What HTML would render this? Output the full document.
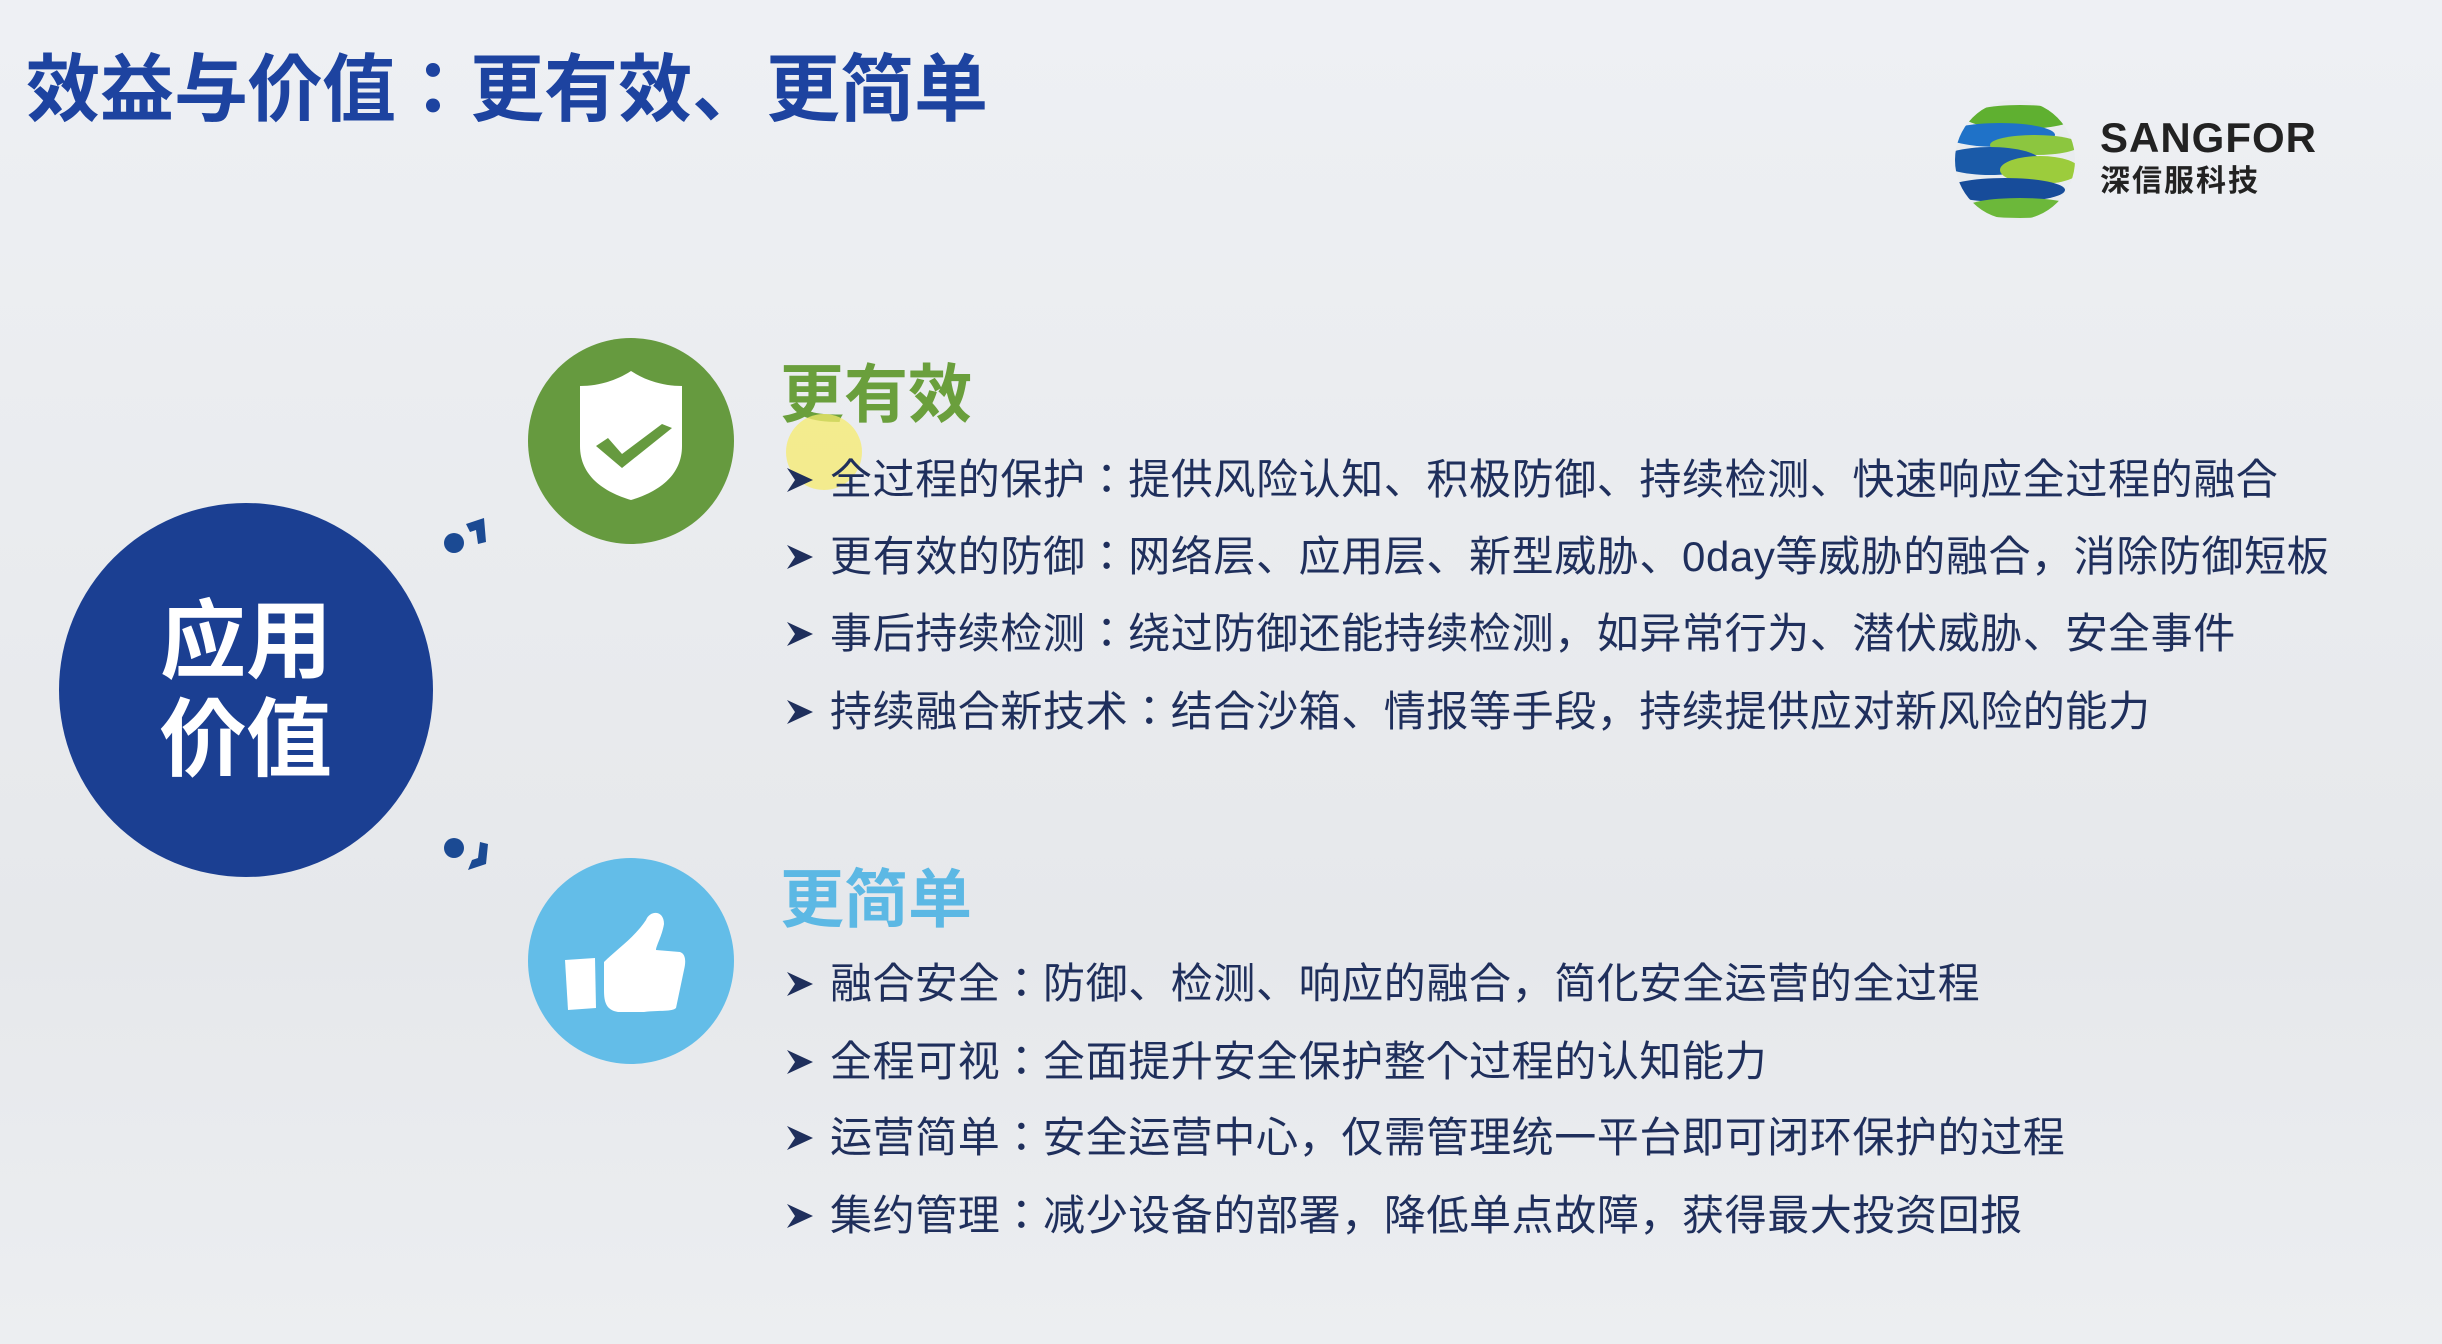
<!DOCTYPE html>
<html><head><meta charset="utf-8"><style>
html,body{margin:0;padding:0}
body{width:2442px;height:1344px;overflow:hidden;position:relative;background:linear-gradient(180deg,#eef0f4 0%,#e9ebee 45%,#e6e8eb 70%,#eceef1 100%);font-family:"Liberation Sans","Noto Sans CJK JP",sans-serif}
.a{position:absolute;white-space:nowrap}
.t{left:26px;top:40px;font-size:74px;font-weight:bold;color:#1d43a0;line-height:100px}
.h{font-size:64px;font-weight:bold;line-height:80px}
.b{font-size:42px;color:#1f2f5c;line-height:60px;letter-spacing:0.6px}
.ar{position:absolute;width:28px;height:28px}
</style></head><body>
<div class="a t">效益与价值：更有效、更简单</div>

<svg class="a" style="left:1950px;top:95px" width="130" height="130" viewBox="0 0 130 130">
<defs><clipPath id="c"><circle cx="65" cy="65" r="60"/></clipPath></defs>
<g clip-path="url(#c)">
<rect x="0" y="0" width="130" height="130" fill="#e9ecef"/>
<ellipse cx="70" cy="22" rx="55" ry="12" fill="#5fb030"/>
<ellipse cx="50" cy="40" rx="55" ry="12" fill="#1f72c8"/>
<ellipse cx="85" cy="50" rx="45" ry="10" fill="#8cc63f"/>
<ellipse cx="40" cy="66" rx="50" ry="14" fill="#1a5aa8"/>
<ellipse cx="90" cy="75" rx="40" ry="14" fill="#9ccc3c"/>
<ellipse cx="55" cy="95" rx="60" ry="12" fill="#174c9a"/>
<ellipse cx="70" cy="113" rx="55" ry="10" fill="#6cb83a"/>
</g></svg>
<div class="a" style="left:2100px;top:112px;font-size:42px;font-weight:bold;color:#222;letter-spacing:1px;line-height:52px">SANGFOR</div>
<div class="a" style="left:2100px;top:164px;font-size:30px;font-weight:bold;color:#222;letter-spacing:2px;line-height:36px">深信服科技</div>

<div class="a" style="left:59px;top:503px;width:374px;height:374px;border-radius:50%;background:#1b3f92"></div>
<div class="a" style="left:59px;top:593px;width:374px;text-align:center;font-size:86px;font-weight:bold;color:#fff;line-height:98px">应用<br>价值</div>

<svg class="a" style="left:438px;top:512px" width="60" height="50" viewBox="0 0 60 50"><circle cx="16" cy="31" r="10" fill="#1b4a93"/><path d="M28 12 L46 6 L48 30 L40 32 L38 18 L32 20Z" fill="#1b4a93"/></svg>
<svg class="a" style="left:438px;top:830px" width="60" height="50" viewBox="0 0 60 50"><circle cx="16" cy="18" r="10" fill="#1b4a93"/><path d="M30 40 L48 34 L50 14 L42 12 L40 28 L34 30Z" fill="#1b4a93"/></svg>

<div class="a" style="left:528px;top:338px;width:206px;height:206px;border-radius:50%;background:#669a3f"></div>
<svg class="a" style="left:574px;top:368px" width="114" height="140" viewBox="0 0 114 140"><path d="M57 3 C40 14 22 18 6 18 L6 78 C6 108 30 124 57 132 C84 124 108 108 108 78 L108 18 C92 18 74 14 57 3Z" fill="#fff"/><path d="M22 78 L48 100 L98 60 L88 56 L48 86 L34 70Z" fill="#669a3f"/></svg>

<div class="a" style="left:528px;top:858px;width:206px;height:206px;border-radius:50%;background:#63bde8"></div>
<svg class="a" style="left:560px;top:880px" width="150" height="150" viewBox="0 0 150 150"><path d="M5 80 L35 78 L36 128 L8 130Z" fill="#fff"/><path d="M44 82 C56 70 74 58 86 40 C90 30 104 30 104 44 C102 56 96 66 96 70 L120 72 C126 74 126 82 124 90 L116 128 C112 132 100 130 84 132 L58 132 C46 130 44 122 44 110Z" fill="#fff"/></svg>

<div class="a h" style="left:780px;top:355px;color:#6a9f3c">更有效</div>
<div class="a" style="left:786px;top:414px;width:76px;height:76px;border-radius:50%;background:rgba(245,235,110,0.75)"></div>
<div class="a h" style="left:780px;top:860px;color:#5cb8e4">更简单</div>

<svg width="0" height="0" style="position:absolute"><defs><path id="ar" d="M2 2 L28 14 L2 26 L10 14Z" fill="#1f2f5c"/></defs></svg>

<svg class="ar" style="left:785px;top:466px"><use href="#ar"/></svg>
<div class="a b" style="left:830px;top:450px">全过程的保护：提供风险认知、积极防御、持续检测、快速响应全过程的融合</div>
<svg class="ar" style="left:785px;top:543px"><use href="#ar"/></svg>
<div class="a b" style="left:830px;top:527px">更有效的防御：网络层、应用层、新型威胁、0day等威胁的融合，消除防御短板</div>
<svg class="ar" style="left:785px;top:620px"><use href="#ar"/></svg>
<div class="a b" style="left:830px;top:604px">事后持续检测：绕过防御还能持续检测，如异常行为、潜伏威胁、安全事件</div>
<svg class="ar" style="left:785px;top:698px"><use href="#ar"/></svg>
<div class="a b" style="left:830px;top:682px">持续融合新技术：结合沙箱、情报等手段，持续提供应对新风险的能力</div>

<svg class="ar" style="left:785px;top:970px"><use href="#ar"/></svg>
<div class="a b" style="left:830px;top:954px">融合安全：防御、检测、响应的融合，简化安全运营的全过程</div>
<svg class="ar" style="left:785px;top:1048px"><use href="#ar"/></svg>
<div class="a b" style="left:830px;top:1032px">全程可视：全面提升安全保护整个过程的认知能力</div>
<svg class="ar" style="left:785px;top:1124px"><use href="#ar"/></svg>
<div class="a b" style="left:830px;top:1108px">运营简单：安全运营中心，仅需管理统一平台即可闭环保护的过程</div>
<svg class="ar" style="left:785px;top:1202px"><use href="#ar"/></svg>
<div class="a b" style="left:830px;top:1186px">集约管理：减少设备的部署，降低单点故障，获得最大投资回报</div>
</body></html>
